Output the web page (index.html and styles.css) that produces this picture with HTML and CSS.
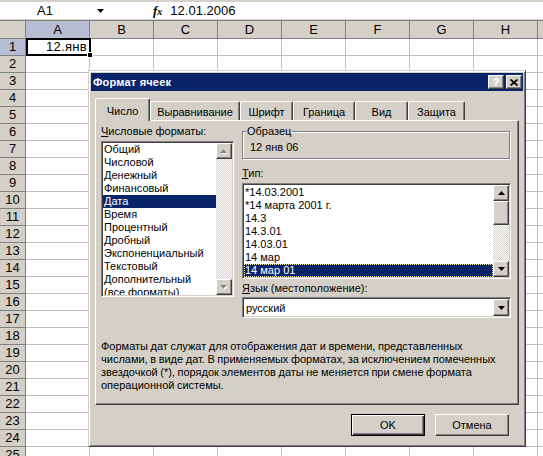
FILE: index.html
```html
<!DOCTYPE html>
<html lang="ru">
<head>
    <meta charset="UTF-8">
    <title>Формат ячеек</title>
    <link rel="stylesheet" href="styles.css">
</head>
<body>
    <!-- Formula bar -->
    <div class="formula-bar">
        <div class="name-box">A1</div>
        <svg class="name-arrow" width="7" height="4" viewBox="0 0 7 4"><path d="M0 0h7L3.5 4z" fill="#000"/></svg>
        <div class="fx">f<span>x</span></div>
        <div class="formula">12.01.2006</div>
    </div>

    <!-- Column headers -->
    <div class="col-headers">
        <div class="corner"></div>
        <div class="col-head selected">A</div>
        <div class="col-head">B</div>
        <div class="col-head">C</div>
        <div class="col-head">D</div>
        <div class="col-head">E</div>
        <div class="col-head">F</div>
        <div class="col-head">G</div>
        <div class="col-head">H</div>
        <div class="col-head"></div>
    </div>

    <!-- Sheet -->
    <div class="sheet">
        <div class="row-headers">
            <div class="row-head selected">1</div>
            <div class="row-head">2</div>
            <div class="row-head">3</div>
            <div class="row-head">4</div>
            <div class="row-head">5</div>
            <div class="row-head">6</div>
            <div class="row-head">7</div>
            <div class="row-head">8</div>
            <div class="row-head">9</div>
            <div class="row-head">10</div>
            <div class="row-head">11</div>
            <div class="row-head">12</div>
            <div class="row-head">13</div>
            <div class="row-head">14</div>
            <div class="row-head">15</div>
            <div class="row-head">16</div>
            <div class="row-head">17</div>
            <div class="row-head">18</div>
            <div class="row-head">19</div>
            <div class="row-head">20</div>
            <div class="row-head">21</div>
            <div class="row-head">22</div>
            <div class="row-head">23</div>
            <div class="row-head">24</div>
            <div class="row-head">25</div>
        </div>
        <div class="cells">
            <div class="active-cell">12.янв<span class="fill-handle"></span></div>
        </div>
    </div>

    <!-- Format Cells dialog -->
    <div class="dialog">
        <div class="title-bar">
            <span class="title">Формат ячеек</span>
            <div class="title-buttons">
                <button class="title-btn help">?</button>
                <button class="title-btn">
                    <svg width="8" height="7" viewBox="0 0 8 7"><path d="M0.5 0.5l7 6M7.5 0.5l-7 6" stroke="#000" stroke-width="1.7"/></svg>
                </button>
            </div>
        </div>

        <div class="dialog-body">
            <div class="tabs">
                <div class="tab active" style="width:55px">Число</div>
                <div class="tab" style="width:90px">Выравнивание</div>
                <div class="tab" style="width:53px">Шрифт</div>
                <div class="tab" style="width:62px">Граница</div>
                <div class="tab" style="width:53px">Вид</div>
                <div class="tab" style="width:57px">Защита</div>
            </div>

            <div class="tab-panel">
                <div class="columns">
                    <div class="left-col">
                        <div class="label"><u>Ч</u>исловые форматы:</div>
                        <div class="listbox formats">
                            <ul class="items">
                                <li>Общий</li>
                                <li>Числовой</li>
                                <li>Денежный</li>
                                <li>Финансовый</li>
                                <li class="selected">Дата</li>
                                <li>Время</li>
                                <li>Процентный</li>
                                <li>Дробный</li>
                                <li>Экспоненциальный</li>
                                <li>Текстовый</li>
                                <li>Дополнительный</li>
                                <li>(все форматы)</li>
                            </ul>
                            <div class="scrollbar">
                                <div class="scroll-btn">
                                    <svg width="8" height="5" viewBox="0 0 8 5"><path d="M1 5h7L4.5 1.5z" fill="#fff"/><path d="M0 4h7L3.5 0.5z" fill="#808080"/></svg>
                                </div>
                                <div class="scroll-track"></div>
                                <div class="scroll-btn">
                                    <svg width="8" height="5" viewBox="0 0 8 5"><path d="M1 1h7L4.5 4.5z" fill="#fff"/><path d="M0 0h7L3.5 3.5z" fill="#808080"/></svg>
                                </div>
                            </div>
                        </div>
                    </div>

                    <div class="right-col">
                        <div class="groupbox">
                            <span class="legend">Образец</span>
                            <div class="sample">12 янв 06</div>
                        </div>
                        <div class="label type-label"><u>Т</u>ип:</div>
                        <div class="listbox types">
                            <ul class="items">
                                <li>*14.03.2001</li>
                                <li>*14 марта 2001 г.</li>
                                <li>14.3</li>
                                <li>14.3.01</li>
                                <li>14.03.01</li>
                                <li>14 мар</li>
                                <li class="selected focused">14 мар 01</li>
                            </ul>
                            <div class="scrollbar">
                                <div class="scroll-btn">
                                    <svg width="7" height="4" viewBox="0 0 7 4"><path d="M0 4h7L3.5 0z" fill="#000"/></svg>
                                </div>
                                <div class="scroll-thumb"></div>
                                <div class="scroll-track"></div>
                                <div class="scroll-btn">
                                    <svg width="7" height="4" viewBox="0 0 7 4"><path d="M0 0h7L3.5 4z" fill="#000"/></svg>
                                </div>
                            </div>
                        </div>
                        <div class="label lang-label"><u>Я</u>зык (местоположение):</div>
                        <div class="combo">
                            <span class="combo-value">русский</span>
                            <div class="scroll-btn combo-btn">
                                <svg width="7" height="4" viewBox="0 0 7 4"><path d="M0 0h7L3.5 4z" fill="#000"/></svg>
                            </div>
                        </div>
                    </div>
                </div>

                <p class="description">
                    Форматы дат служат для отображения дат и времени, представленных<br>
                    числами, в виде дат. В применяемых форматах, за исключением помеченных<br>
                    звездочкой (*), порядок элементов даты не меняется при смене формата<br>
                    операционной системы.
                </p>
            </div>

            <div class="dialog-buttons">
                <button class="btn default">OK</button>
                <button class="btn">Отмена</button>
            </div>
        </div>
    </div>
</body>
</html>
```

FILE: styles.css
```css
:root {
    --face: #d4d0c8;
    --shadow: #808080;
    --dark: #404040;
    --select: #0a246a;
    --grid: #c0c0c0;
    --head-selected: #b6bdd2;
}

* {
    margin: 0;
    padding: 0;
    box-sizing: border-box;
}

body {
    position: relative;
    width: 543px;
    height: 456px;
    overflow: hidden;
    background: #fff;
    color: #000;
    font-family: "Liberation Sans", Arial, sans-serif;
    font-size: 13px;
}

button {
    font-family: inherit;
    font-size: inherit;
    color: inherit;
    background: var(--face);
}

/* ---------- formula bar ---------- */

.formula-bar {
    display: flex;
    align-items: center;
    height: 20px;
    border-top: 2px solid var(--face);
    border-bottom: 1px solid var(--face);
}

.name-box {
    width: 90px;
    text-align: center;
}

.name-arrow {
    margin-left: 7px;
}

.fx {
    margin-left: 49px;
    font-family: "Liberation Serif", serif;
    font-style: italic;
    font-weight: bold;
    font-size: 13px;
}

.fx span { font-size: 10px; }

.formula {
    margin-left: 8px;
}

/* ---------- sheet ---------- */

.col-headers {
    display: flex;
    height: 19px;
    background: var(--face);
    border-top: 1px solid var(--shadow);
    border-bottom: 1px solid var(--shadow);
}

.corner {
    width: 26px;
    flex: none;
    border-right: 1px solid var(--shadow);
}

.col-head {
    width: 64px;
    flex: none;
    border-right: 1px solid var(--shadow);
    text-align: center;
    line-height: 17px;
}

.col-head.selected,
.row-head.selected {
    background: var(--head-selected);
}

.sheet {
    display: flex;
}

.row-headers {
    width: 26px;
    flex: none;
}

.row-head {
    height: 17px;
    background: var(--face);
    border-right: 1px solid var(--shadow);
    border-bottom: 1px solid var(--shadow);
    text-align: center;
    line-height: 16px;
}

.cells {
    position: relative;
    flex: 1;
    height: 425px;
    background-image:
        linear-gradient(to right, transparent 63px, var(--grid) 63px),
        linear-gradient(to bottom, transparent 16px, var(--grid) 16px);
    background-size: 64px 17px;
}

.active-cell {
    position: absolute;
    left: 0;
    top: -1px;
    width: 65px;
    height: 18px;
    border: 2px solid #000;
    padding-right: 2px;
    text-align: right;
    line-height: 14px;
    letter-spacing: 0.3px;
}

.fill-handle {
    position: absolute;
    right: -4px;
    bottom: -4px;
    width: 6px;
    height: 6px;
    background: #000;
    border: 1px solid #fff;
}

/* ---------- dialog ---------- */

.dialog {
    position: absolute;
    left: 88px;
    top: 70px;
    width: 438px;
    height: 377px;
    display: flex;
    flex-direction: column;
    padding: 2px;
    background: var(--face);
    border: 1px solid;
    border-color: var(--face) var(--dark) var(--dark) var(--face);
    box-shadow: inset 1px 1px #fff, inset -1px -1px var(--shadow);
    font-size: 11px;
}

.title-bar {
    display: flex;
    align-items: center;
    justify-content: space-between;
    height: 18px;
    padding: 0 1px 0 2px;
    background: var(--select);
    color: #fff;
}

.title {
    font-weight: bold;
    letter-spacing: 0.2px;
}

.title-buttons {
    display: flex;
    gap: 2px;
}

.title-btn,
.scroll-btn,
.scroll-thumb,
.btn {
    background: var(--face);
    border: 1px solid;
    border-color: #fff var(--dark) var(--dark) #fff;
    box-shadow: inset -1px -1px var(--shadow);
}

.title-btn {
    display: flex;
    align-items: center;
    justify-content: center;
    width: 16px;
    height: 14px;
    font-weight: bold;
    line-height: 12px;
}

.title-btn.help { font-size: 11px; }

.dialog-body {
    flex: 1;
    display: flex;
    flex-direction: column;
    padding: 7px 4px 0;
}

.tabs {
    display: flex;
    align-items: flex-end;
    height: 23px;
    margin-bottom: -1px;
}

.tab {
    flex: none;
    height: 20px;
    padding-top: 4px;
    border: 1px solid;
    border-bottom: none;
    border-color: #fff var(--dark) transparent #fff;
    border-radius: 2px 2px 0 0;
    box-shadow: inset -1px 0 var(--shadow);
    text-align: center;
    line-height: 13px;
}

.tab.active {
    position: relative;
    z-index: 1;
    height: 23px;
    padding-top: 6px;
    background: var(--face);
}

.tab-panel {
    height: 285px;
    padding: 4px 0 0 5px;
    border: 1px solid;
    border-color: #fff var(--dark) var(--dark) #fff;
    box-shadow: inset -1px -1px var(--shadow);
}

.columns {
    display: flex;
    gap: 8px;
}

.left-col { width: 133px; }
.right-col { width: 269px; padding-top: 6px; }

.label { line-height: 13px; }

.listbox {
    display: flex;
    padding: 1px;
    background: #fff;
    border: 1px solid;
    border-color: var(--shadow) #fff #fff var(--shadow);
    box-shadow: inset 1px 1px var(--dark), inset -1px -1px var(--face);
    overflow: hidden;
}

.items {
    flex: 1;
    list-style: none;
    overflow: hidden;
}

.items li {
    height: 13px;
    padding-left: 1px;
    line-height: 13px;
    white-space: nowrap;
}

.items li.selected {
    background: var(--select);
    color: #fff;
}

.items li.focused {
    outline: 1px dotted #f4eba8;
    outline-offset: -1px;
}

.scrollbar {
    display: flex;
    flex-direction: column;
    flex: none;
    width: 16px;
}

.scroll-btn {
    display: flex;
    align-items: center;
    justify-content: center;
    flex: none;
    height: 16px;
}

.scroll-thumb {
    flex: none;
    height: 24px;
}

.scroll-track {
    flex: 1;
    background: repeating-conic-gradient(#fff 0 25%, var(--face) 0 50%) 0 0 / 2px 2px;
}

.formats {
    height: 156px;
    margin-top: 3px;
}

.groupbox {
    position: relative;
    width: 268px;
    height: 28px;
    padding: 9px 0 0 7px;
    border: 1px solid var(--shadow);
    box-shadow: inset 1px 1px #fff, 1px 1px #fff;
    line-height: 13px;
}

.legend {
    position: absolute;
    top: -7px;
    left: 3px;
    padding: 0 1px;
    background: var(--face);
}

.type-label { margin-top: 8px; }

.types {
    height: 96px;
    margin-top: 3px;
}

.types .items { padding-top: 1px; }

.lang-label { margin-top: 3px; }

.combo {
    display: flex;
    align-items: center;
    height: 21px;
    margin-top: 2px;
    padding: 1px;
    background: #fff;
    border: 1px solid;
    border-color: var(--shadow) #fff #fff var(--shadow);
    box-shadow: inset 1px 1px var(--dark), inset -1px -1px var(--face);
}

.combo-value {
    flex: 1;
    padding-left: 2px;
}

.combo-btn {
    width: 16px;
    height: 17px;
}

.description {
    margin-top: 22px;
    line-height: 13px;
    word-spacing: -0.5px;
    white-space: nowrap;
}

.dialog-buttons {
    display: flex;
    justify-content: flex-end;
    gap: 10px;
    margin-top: 9px;
    padding-right: 10px;
}

.btn {
    width: 74px;
    height: 22px;
}

.btn.default {
    border: 1px solid #000;
    box-shadow: inset 1px 1px #fff, inset -1px -1px var(--dark), inset -2px -2px var(--shadow);
}
```
